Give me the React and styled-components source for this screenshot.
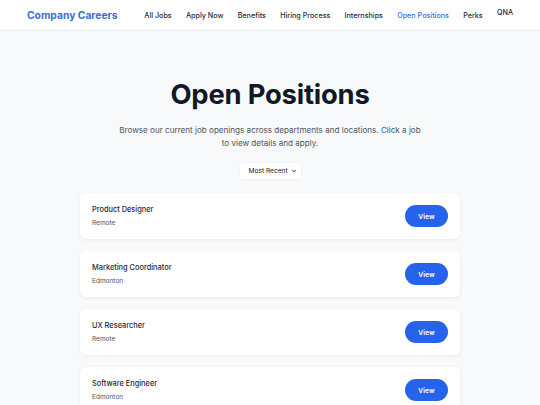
import React from "react";
import styled, { createGlobalStyle } from "styled-components";

const Global = createGlobalStyle`
  html, body { margin: 0; padding: 0; }
  body {
    background: #f8f9fb;
    font-family: Inter, "Noto Sans", Arial, sans-serif;
    color: #111827;
    overflow: hidden;
  }
  * { box-sizing: border-box; }
`;

const Header = styled.header`
  height: 31px;
  background: #ffffff;
  border-bottom: 1px solid #e9ecf1;
  display: flex;
  align-items: center;
  justify-content: space-between;
  padding: 0 27px;
`;

const Logo = styled.div`
  font-size: 10.3px;
  font-weight: 700;
  color: #3b6fd4;
`;

const Nav = styled.nav`
  display: flex;
  align-items: center;
  gap: 14.2px;
`;

const NavLink = styled.a`
  font-size: 7.2px;
  font-weight: 500;
  color: ${(p) => (p.$active ? "#3b6fd4" : "#1f2937")};
  text-decoration: none;
  position: relative;
  top: ${(p) => (p.$raised ? "-3px" : "0")};
`;

const Main = styled.main`
  display: flex;
  flex-direction: column;
  align-items: center;
  padding-top: 46px;
`;

const Title = styled.h1`
  margin: 0;
  font-size: 27.4px;
  font-weight: 700;
  color: #111827;
  letter-spacing: -0.2px;
  line-height: 34px;
`;

const Subtitle = styled.p`
  margin: 13px 0 0;
  max-width: 306px;
  text-align: center;
  font-size: 8.1px;
  line-height: 13px;
  color: #4b5563;
`;

const SelectBox = styled.div`
  margin-top: 13px;
  height: 16px;
  width: 61px;
  background: #fff;
  border-radius: 4px;
  box-shadow: 0 0 0 0.5px #eef0f3, 0 1px 2px rgba(0, 0, 0, 0.04);
  display: flex;
  align-items: center;
  justify-content: space-between;
  padding: 0 4px 0 9px;
  font-size: 6.6px;
  color: #111827;
`;

const Chevron = styled.svg`
  width: 6px;
  height: 6px;
`;

const List = styled.div`
  margin-top: 14px;
  width: 380px;
  display: flex;
  flex-direction: column;
  gap: 12px;
`;

const Card = styled.div`
  height: 46px;
  background: #fff;
  border-radius: 6px;
  box-shadow: 0 1px 4px rgba(17, 24, 39, 0.06);
  display: flex;
  align-items: center;
  justify-content: space-between;
  padding: 0 12px;
`;

const Info = styled.div`
  display: flex;
  flex-direction: column;
  gap: 3px;
  padding-top: 1px;
`;

const JobTitle = styled.div`
  font-size: 7.4px;
  font-weight: 500;
  color: #1f2937;
  line-height: 11px;
`;

const Location = styled.div`
  font-size: 6.5px;
  color: #4b5563;
  line-height: 11px;
`;

const ViewButton = styled.button`
  width: 43px;
  height: 22px;
  border: none;
  border-radius: 11px;
  background: #2563eb;
  color: #fff;
  font-family: inherit;
  font-size: 6.8px;
  font-weight: 600;
  cursor: pointer;
`;

const navItems = [
  "All Jobs",
  "Apply Now",
  "Benefits",
  "Hiring Process",
  "Internships",
  "Open Positions",
  "Perks",
  "QNA",
];

const jobs = [
  { title: "Product Designer", location: "Remote" },
  { title: "Marketing Coordinator", location: "Edmonton" },
  { title: "UX Researcher", location: "Remote" },
  { title: "Software Engineer", location: "Edmonton" },
];

export default function App() {
  return (
    <>
      <Global />
      <Header>
        <Logo>Company Careers</Logo>
        <Nav>
          {navItems.map((n) => (
            <NavLink
              key={n}
              href="#"
              $active={n === "Open Positions"}
              $raised={n === "QNA"}
            >
              {n}
            </NavLink>
          ))}
        </Nav>
      </Header>
      <Main>
        <Title>Open Positions</Title>
        <Subtitle>
          Browse our current job openings across departments and locations.
          Click a job to view details and apply.
        </Subtitle>
        <SelectBox>
          <span>Most Recent</span>
          <Chevron viewBox="0 0 10 10">
            <path d="M2.5 3.8 L5 6.3 L7.5 3.8" fill="none" stroke="#111827" strokeWidth="1.4" strokeLinecap="round" strokeLinejoin="round" />
          </Chevron>
        </SelectBox>
        <List>
          {jobs.map((j) => (
            <Card key={j.title}>
              <Info>
                <JobTitle>{j.title}</JobTitle>
                <Location>{j.location}</Location>
              </Info>
              <ViewButton>View</ViewButton>
            </Card>
          ))}
        </List>
      </Main>
    </>
  );
}
